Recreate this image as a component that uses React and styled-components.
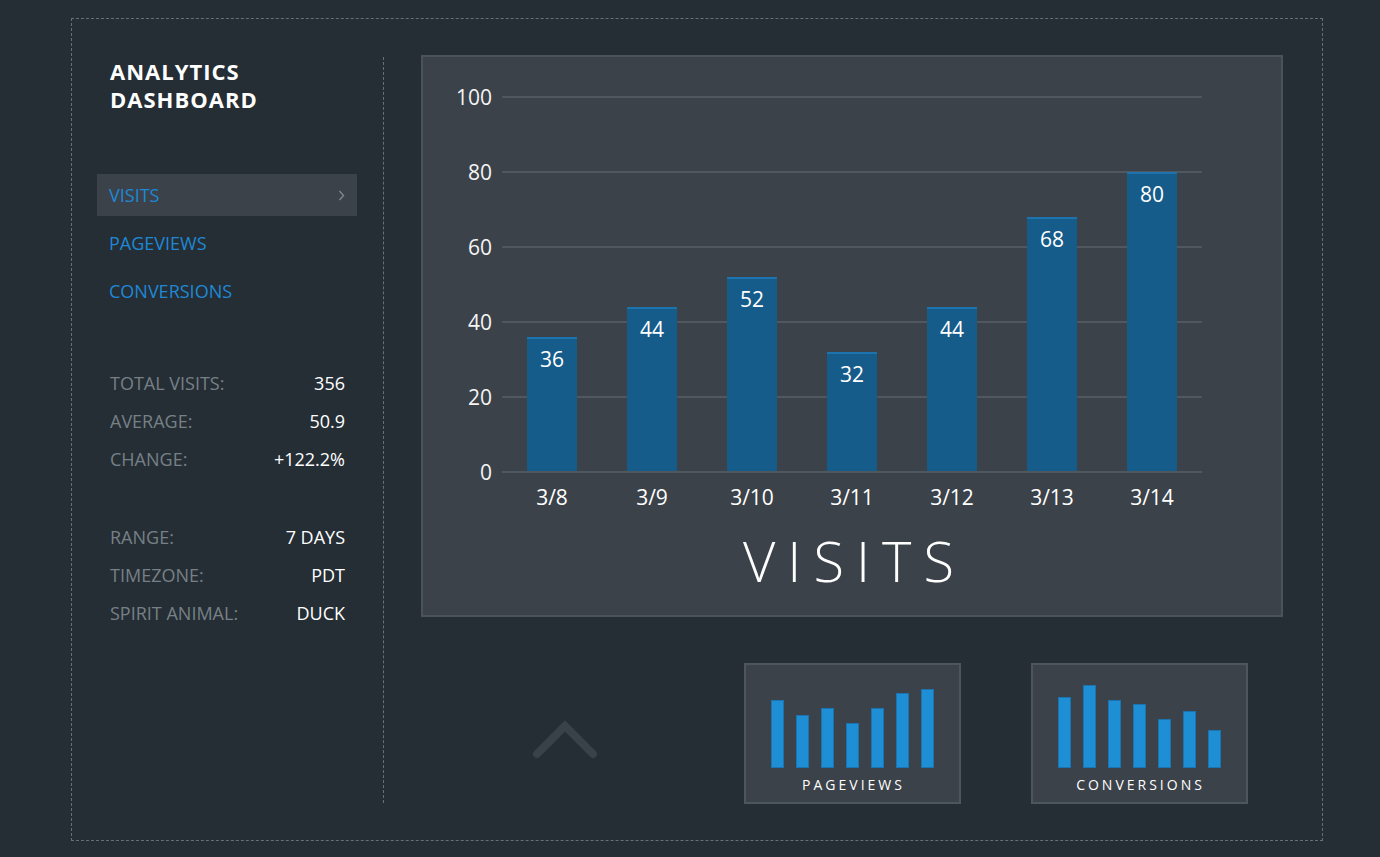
import React from "react";
import styled, { createGlobalStyle } from "styled-components";

const Global = createGlobalStyle`
  html, body { margin: 0; padding: 0; background: #252e35; }
  body { font-family: "Open Sans", "Noto Sans", sans-serif; color: #f2f2f2; }
  * { box-sizing: border-box; }
`;

const Frame = styled.div`
  margin: 18px 0 0 71px;
  width: 1252px;
  border: 1px dashed #667077;
  padding: 36px 38px 36px 25px;
  display: flex;
  align-items: stretch;
`;

const Sidebar = styled.aside`
  width: 287px;
  margin: 2px 0 1px;
  padding-right: 26px;
  border-right: 1px dashed #667077;
  display: flex;
  flex-direction: column;
`;

const Title = styled.h1`
  margin: 0;
  padding-left: 13px;
  font-size: 22px;
  line-height: 28px;
  font-weight: 700;
  letter-spacing: 1px;
  color: #ffffff;
`;

const Nav = styled.ul`
  list-style: none;
  margin: 61px 0 0;
  padding: 0;
  display: flex;
  flex-direction: column;
  gap: 6px;
`;

const NavItem = styled.li`
  height: 42px;
  display: flex;
  align-items: center;
  justify-content: space-between;
  padding: 0 12px;
  font-size: 18px;
  color: #1f88d6;
  background: ${(p) => (p.$active ? "#3b424a" : "transparent")};
`;

const Stats = styled.dl`
  margin: ${(p) => p.$gap}px 0 0;
  padding: 0;
`;

const StatRow = styled.div`
  height: 38px;
  display: flex;
  align-items: center;
  justify-content: space-between;
  padding: 0 12px 0 13px;
  font-size: 18px;
`;

const StatLabel = styled.dt`
  color: #778086;
`;

const StatValue = styled.dd`
  margin: 0;
  color: #ffffff;
`;

const Main = styled.main`
  margin-left: 37px;
  width: 862px;
  display: flex;
  flex-direction: column;
`;

const ChartPanel = styled.section`
  height: 562px;
  background: #3b424a;
  border: 2px solid #4b535a;
  display: flex;
  flex-direction: column;
  padding-bottom: 27px;
`;

const ChartTitle = styled.h2`
  margin: 0;
  text-align: center;
  font-size: 56px;
  line-height: 56px;
  font-weight: 300;
  letter-spacing: 12px;
  padding-left: 5px;
  color: #ffffff;
`;

const BottomRow = styled.div`
  margin-top: 46px;
  display: flex;
  justify-content: center;
  gap: 70px;
`;

const ChevronCell = styled.div`
  width: 217px;
  height: 141px;
  display: flex;
  justify-content: center;
  padding-top: 56px;
`;

const Thumb = styled.div`
  width: 217px;
  height: 141px;
  background: #3b424a;
  border: 2px solid #4e565d;
  display: flex;
  flex-direction: column;
  align-items: center;
  padding-top: 13px;
`;

const ThumbBars = styled.div`
  height: 90px;
  display: flex;
  align-items: flex-end;
  gap: 12px;
`;

const ThumbBar = styled.div`
  width: 13px;
  height: ${(p) => p.$h}px;
  background: #1e8ed5;
  border: 1px solid #1a74b2;
`;

const ThumbLabel = styled.div`
  margin-top: 9px;
  font-size: 14px;
  line-height: 16px;
  letter-spacing: 3px;
  padding-left: 3px;
  color: #ffffff;
`;

const visits = [
  ["3/8", 36],
  ["3/9", 44],
  ["3/10", 52],
  ["3/11", 32],
  ["3/12", 44],
  ["3/13", 68],
  ["3/14", 80],
];

function BarChart() {
  const base = 415;
  const k = 3.75;
  return (
    <svg width="858" height="475" style={{ display: "block" }}>
      {[0, 20, 40, 60, 80, 100].map((v) => {
        const y = base - v * k;
        return (
          <g key={v}>
            {v !== 0 && (
              <line x1="79" x2="779" y1={y} y2={y} stroke="#50585f" strokeWidth="2" />
            )}
            <text
              x="69"
              y={y + 8}
              textAnchor="end"
              fontFamily="Open Sans, sans-serif"
              fontSize="21"
              fill="#f4f4f4"
            >
              {v}
            </text>
          </g>
        );
      })}
      {visits.map(([d, v], i) => {
        const x = 104 + i * 100;
        const h = v * k;
        const top = base - h;
        return (
          <g key={d}>
            <rect x={x} y={top} width="50" height={h} fill="#155c8a" />
            <rect x={x} y={top} width="50" height="2" fill="#1c73ae" />
            <text
              x={x + 25}
              y={top + 30}
              textAnchor="middle"
              fontFamily="Open Sans, sans-serif"
              fontSize="21"
              fill="#ffffff"
            >
              {v}
            </text>
            <text
              x={x + 25}
              y="448"
              textAnchor="middle"
              fontFamily="Open Sans, sans-serif"
              fontSize="21"
              fill="#ffffff"
            >
              {d}
            </text>
          </g>
        );
      })}
      <line x1="79" x2="779" y1={base} y2={base} stroke="#50585f" strokeWidth="2" />
    </svg>
  );
}

function NavChevron() {
  return (
    <svg width="7" height="11" viewBox="0 0 7 11">
      <polyline points="1.5,1 5.5,5.5 1.5,10" fill="none" stroke="#7f878e" strokeWidth="1.4" />
    </svg>
  );
}

function UpChevron() {
  return (
    <svg width="70" height="44" viewBox="0 0 70 44">
      <polyline
        points="7,35 35,7 63,35"
        fill="none"
        stroke="#3a4249"
        strokeWidth="8"
        strokeLinecap="round"
        strokeLinejoin="miter"
      />
    </svg>
  );
}

const pageviews = [68, 53, 60, 45, 60, 75, 79];
const conversions = [71, 83, 68, 64, 49, 57, 38];

export default function App() {
  return (
    <>
      <Global />
      <Frame>
        <Sidebar>
          <Title>
            ANALYTICS
            <br />
            DASHBOARD
          </Title>
          <Nav>
            <NavItem $active>
              VISITS
              <NavChevron />
            </NavItem>
            <NavItem>PAGEVIEWS</NavItem>
            <NavItem>CONVERSIONS</NavItem>
          </Nav>
          <Stats $gap={52}>
            <StatRow>
              <StatLabel>TOTAL VISITS:</StatLabel>
              <StatValue>356</StatValue>
            </StatRow>
            <StatRow>
              <StatLabel>AVERAGE:</StatLabel>
              <StatValue>50.9</StatValue>
            </StatRow>
            <StatRow>
              <StatLabel>CHANGE:</StatLabel>
              <StatValue>+122.2%</StatValue>
            </StatRow>
          </Stats>
          <Stats $gap={40}>
            <StatRow>
              <StatLabel>RANGE:</StatLabel>
              <StatValue>7 DAYS</StatValue>
            </StatRow>
            <StatRow>
              <StatLabel>TIMEZONE:</StatLabel>
              <StatValue>PDT</StatValue>
            </StatRow>
            <StatRow>
              <StatLabel>SPIRIT ANIMAL:</StatLabel>
              <StatValue>DUCK</StatValue>
            </StatRow>
          </Stats>
        </Sidebar>
        <Main>
          <ChartPanel>
            <BarChart />
            <ChartTitle>VISITS</ChartTitle>
          </ChartPanel>
          <BottomRow>
            <ChevronCell>
              <UpChevron />
            </ChevronCell>
            <Thumb>
              <ThumbBars>
                {pageviews.map((h, i) => (
                  <ThumbBar key={i} $h={h} />
                ))}
              </ThumbBars>
              <ThumbLabel>PAGEVIEWS</ThumbLabel>
            </Thumb>
            <Thumb>
              <ThumbBars>
                {conversions.map((h, i) => (
                  <ThumbBar key={i} $h={h} />
                ))}
              </ThumbBars>
              <ThumbLabel>CONVERSIONS</ThumbLabel>
            </Thumb>
          </BottomRow>
        </Main>
      </Frame>
    </>
  );
}
